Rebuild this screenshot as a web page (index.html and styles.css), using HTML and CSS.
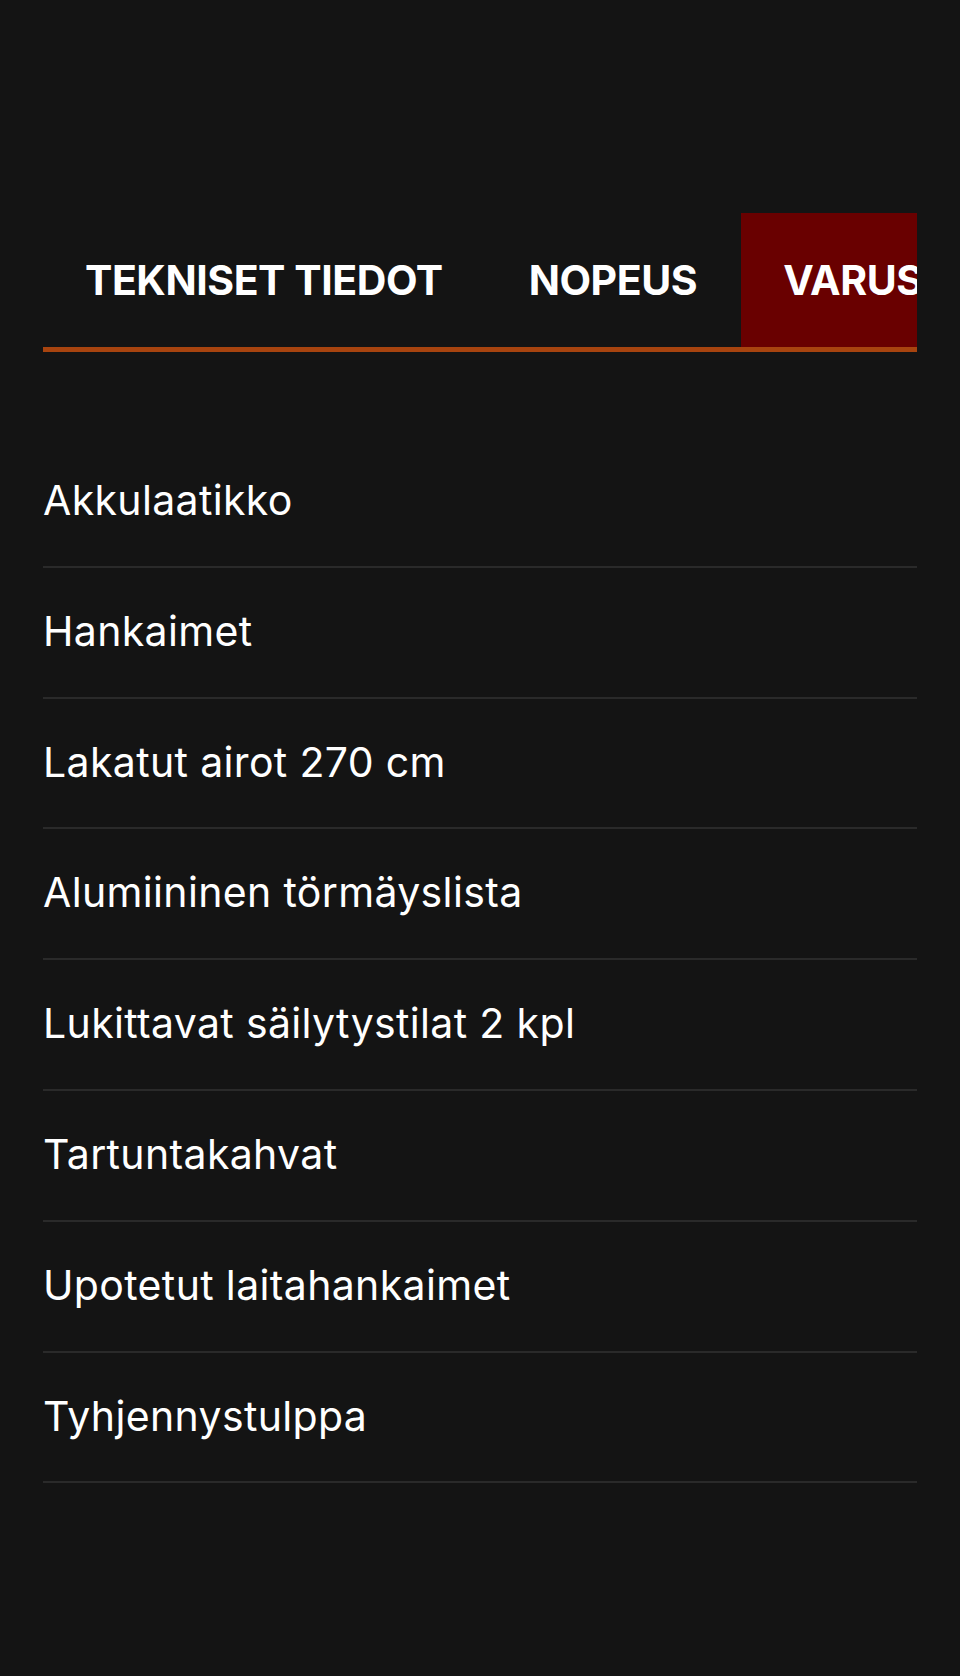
FILE: index.html
```html
<!DOCTYPE html>
<html lang="fi">
<head>
    <meta charset="UTF-8">
    <meta name="viewport" content="width=device-width, initial-scale=1.0">
    <title>Varusteet</title>
    <link rel="stylesheet" href="styles.css">
</head>
<body>

    <div class="container">
        <div class="tabs">
            <div class="tab">TEKNISET TIEDOT</div>
            <div class="tab">NOPEUS</div>
            <div class="tab active">VARUSTEET</div>
        </div>

        <ul class="equipment">
            <li>Akkulaatikko</li>
            <li>Hankaimet</li>
            <li>Lakatut airot 270 cm</li>
            <li>Alumiininen törmäyslista</li>
            <li>Lukittavat säilytystilat 2 kpl</li>
            <li>Tartuntakahvat</li>
            <li>Upotetut laitahankaimet</li>
            <li>Tyhjennystulppa</li>
        </ul>
    </div>

</body>
</html>
```

FILE: styles.css
```css
/* Fond sombre sur toute la page */
html {
    background: #141414;
}

body {
    margin: 0;
    padding: 0;
    min-height: 1676px;
    font-family: 'Inter', 'Liberation Sans', sans-serif;
    color: #fff;
}

/* Conteneur principal */
.container {
    padding: 213px 43px 0;
}

/* Onglets */
.tabs {
    display: flex;
    overflow: hidden;
    border-bottom: 5px solid #a8440f;
}

.tab {
    flex: none;
    display: flex;
    align-items: center;
    height: 134px;
    padding: 0 44px 0 42px;
    font-size: 41px;
    font-weight: 700;
    letter-spacing: -0.45px;
    white-space: nowrap;
}

.tab.active {
    background: #690000;
}

/* Liste des équipements */
.equipment {
    list-style: none;
    margin: 85px 0 0;
    padding: 0;
}

.equipment li {
    padding: 39px 0 40.8px;
    font-size: 41px;
    line-height: 49px;
    letter-spacing: 0.35px;
    border-bottom: 2px solid #2a2a2a;
}
```
